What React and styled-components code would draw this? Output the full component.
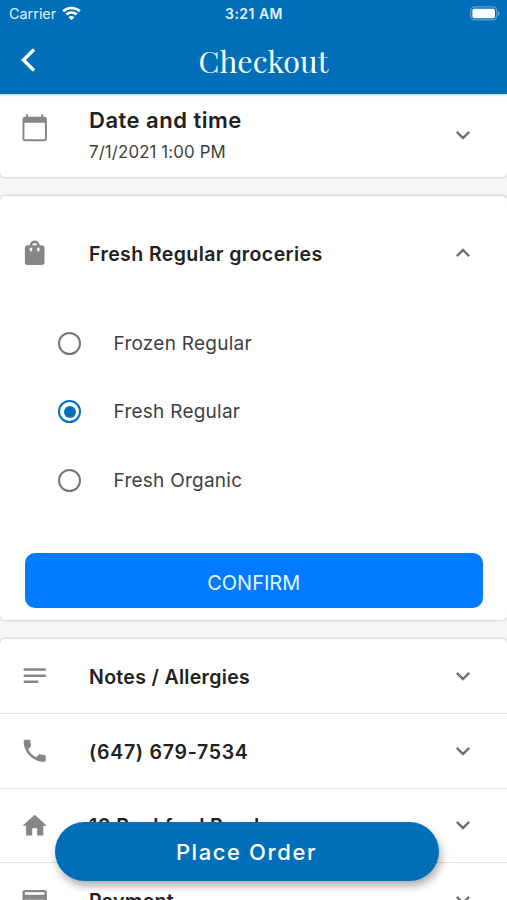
import React, { useState } from "react";
import styled, { createGlobalStyle } from "styled-components";

const GlobalStyle = createGlobalStyle`
  * { box-sizing: border-box; }
  body { margin: 0; background: #f6f6f6; font-family: Inter, "Liberation Sans", sans-serif; }
  button { font-family: inherit; border: 0; padding: 0; }
`;

const Screen = styled.div`
  position: relative;
  width: 507px;
  height: 900px;
  overflow: hidden;
  background: #f6f6f6;
  color: #212121;
`;

const Header = styled.header`
  position: relative;
  z-index: 1;
  height: 94px;
  background: #006fb9;
  color: #fff;
  box-shadow: 0 1px 2px rgba(0, 50, 110, 0.28);
`;

const StatusBar = styled.div`
  display: grid;
  grid-template-columns: 1fr auto 1fr;
  align-items: center;
  height: 27px;
  padding: 0 7px 0 9px;
  font-size: 14.4px;
  color: #e3f2fc;
`;

const Carrier = styled.div`
  display: flex;
  align-items: center;
  gap: 6px;
`;

const Clock = styled.div`
  margin-left: -1px;
  font-size: 14px;
  font-weight: 600;
  letter-spacing: 0.45px;
`;

const BatterySlot = styled.div`
  display: flex;
  justify-content: flex-end;
`;

const TitleBar = styled.div`
  display: grid;
  grid-template-columns: 60px 1fr 60px;
  align-items: center;
  height: 67px;
`;

const BackButton = styled.button`
  display: flex;
  justify-content: center;
  width: 56px;
  margin-top: -2px;
  background: none;
  color: #fff;
`;

const Title = styled.h1`
  margin: 0;
  padding: 1px 0 0 20px;
  text-align: center;
  font: 400 30.4px/40px "Playfair Display", "Liberation Serif", serif;
`;

const Card = styled.section`
  height: ${(p) => p.$height}px;
  margin-bottom: 19px;
  background: #fff;
  border-radius: ${(p) => (p.$first ? "0 0 5px 5px" : "5px")};
  box-shadow: 0 0 3px rgba(0, 0, 0, 0.3);
`;

const Row = styled.div`
  display: grid;
  grid-template-columns: 70px 1fr 88px;
  align-items: center;
  height: ${(p) => p.$height}px;
  border-bottom: ${(p) => (p.$divided ? "1px solid #e1e1e1" : "0")};
`;

const IconSlot = styled.div`
  display: flex;
  justify-content: center;
  color: #868686;
  padding-bottom: ${(p) => p.$lift || 0}px;
`;

const Label = styled.div`
  padding-left: 19px;
  padding-top: 2px;
  font-size: 19.5px;
  font-weight: 600;
  line-height: 26px;
  letter-spacing: ${(p) => p.$spacing ?? 0.41}px;
  white-space: nowrap;
`;

const DateBlock = styled.div`
  padding: 1px 0 0 19px;
`;

const DateHeading = styled.div`
  font-size: 22px;
  font-weight: 600;
  line-height: 30px;
  letter-spacing: 0.5px;
`;

const DateValue = styled.div`
  margin-top: 4px;
  font-size: 16.8px;
  line-height: 27px;
  letter-spacing: 0.15px;
  color: #3d3d3d;
`;

const ChevronSlot = styled.div`
  display: flex;
  justify-content: center;
  color: #707070;
`;

const Options = styled.div`
  display: flex;
  flex-direction: column;
`;

const Option = styled.label`
  display: flex;
  align-items: center;
  height: 68.5px;
  padding-left: 58px;
  gap: 32.5px;
  font-size: 19px;
  letter-spacing: 0.25px;
  color: #404040;
`;

const Radio = styled.span`
  display: grid;
  place-items: center;
  width: 23px;
  height: 23px;
  border: 2.6px solid ${(p) => (p.$on ? "#006fb9" : "#757575")};
  border-radius: 50%;
  &::after {
    content: "";
    width: 12px;
    height: 12px;
    border-radius: 50%;
    background: ${(p) => (p.$on ? "#006fb9" : "transparent")};
  }
`;

const ConfirmButton = styled.button`
  display: block;
  width: 457.5px;
  height: 54.6px;
  margin: 38.8px 0 0 25px;
  padding-top: 5px;
  border-radius: 10px;
  background: #007aff;
  color: #e9f4ff;
  font-size: 20px;
`;

const PlaceOrderButton = styled.button`
  position: absolute;
  left: 54.5px;
  top: 822px;
  width: 384px;
  height: 58.5px;
  padding-top: 1px;
  border-radius: 30px;
  background: #006fb9;
  color: #fff;
  font-size: 22px;
  font-weight: 500;
  letter-spacing: 1.6px;
  box-shadow: 2px 5px 8px rgba(0, 0, 0, 0.32);
`;

const icons = {
  calendar: "M20 3h-1V1h-1.6v2H6.6V1H5v2H4c-1.1 0-2 .9-2 2v16c0 1.1.9 2 2 2h16c1.1 0 2-.9 2-2V5c0-1.1-.9-2-2-2zm.4 18.4H3.6V8h16.8v13.4z",
  bag: "M18 6h-2c0-2.21-1.79-4-4-4S8 3.79 8 6H6c-1.1 0-2 .9-2 2v12c0 1.1.9 2 2 2h12c1.1 0 2-.9 2-2V8c0-1.1-.9-2-2-2zm-8 4c0 .55-.45 1-1 1s-1-.45-1-1V8h2v2zm2-6c1.1 0 2 .9 2 2h-4c0-1.1.9-2 2-2zm4 6c0 .55-.45 1-1 1s-1-.45-1-1V8h2v2z",
  notes: "M3 18h12v-2H3v2zM3 6v2h18V6H3zm0 7h18v-2H3v2z",
  phone: "M6.62 10.79c1.44 2.83 3.76 5.14 6.59 6.59l2.2-2.2c.27-.27.67-.36 1.02-.24 1.12.37 2.33.57 3.57.57.55 0 1 .45 1 1V20c0 .55-.45 1-1 1-9.39 0-17-7.61-17-17 0-.55.45-1 1-1h3.5c.55 0 1 .45 1 1 0 1.25.2 2.45.57 3.57.11.35.03.74-.25 1.02l-2.2 2.2z",
  home: "M10 20v-6h4v6h5v-8h3L12 3 2 12h3v8z",
  card: "M20 4H4c-1.11 0-1.99.89-1.99 2L2 18c0 1.11.89 2 2 2h16c1.11 0 2-.89 2-2V6c0-1.11-.89-2-2-2zm0 14H4v-6h16v6zm0-10H4V6h16v2z",
  down: "M16.59 8.59L12 13.17 7.41 8.59 6 10l6 6 6-6z",
  up: "M12 8l-6 6 1.41 1.41L12 10.83l4.59 4.58L18 14z",
};

function Glyph({ name, size = 29.4 }) {
  return (
    <svg width={size} height={size} viewBox="0 0 24 24" fill="currentColor" aria-hidden="true">
      <path d={icons[name]} />
    </svg>
  );
}

function Wifi() {
  return (
    <svg width="19" height="15" viewBox="0 0 19 15" fill="none" stroke="#fff" strokeWidth="2.7">
      <path d="M1.2 5.2C5.8.9 13.2.9 17.8 5.2" />
      <path d="M4.3 8.6c3-2.8 7.4-2.8 10.4 0" />
      <path d="M9.5 14.2 6.5 11.2c1.7-1.5 4.3-1.5 6 0z" fill="#fff" stroke="none" />
    </svg>
  );
}

function Battery() {
  return (
    <svg width="30" height="15" viewBox="0 0 30 15">
      <rect x=".7" y=".9" width="26" height="13" rx="3.8" fill="none" stroke="#5ba1d2" strokeWidth="1.2" />
      <rect x="2.4" y="2.8" width="22.6" height="9.4" rx="2" fill="#fff" />
      <path d="M28 5.2c2 .7 2 3.8 0 4.5z" fill="#72afd9" />
    </svg>
  );
}

const details = [
  { icon: "notes", text: "Notes / Allergies", spacing: 0.32 },
  { icon: "phone", text: "(647) 679-7534", spacing: 0.72 },
  { icon: "home", text: "10 Rockford Road", spacing: 0.4 },
  { icon: "card", text: "Payment", spacing: 0.35 },
];

export default function App() {
  const [choice, setChoice] = useState("Fresh Regular");
  return (
    <>
      <GlobalStyle />
      <Screen>
        <Header>
          <StatusBar>
            <Carrier>Carrier <Wifi /></Carrier>
            <Clock>3:21 AM</Clock>
            <BatterySlot><Battery /></BatterySlot>
          </StatusBar>
          <TitleBar>
            <BackButton aria-label="Back">
              <svg width="18" height="26" viewBox="0 0 18 26" fill="none" stroke="currentColor" strokeWidth="3.4">
                <path d="M15 2.5 4.5 13 15 23.5" />
              </svg>
            </BackButton>
            <Title>Checkout</Title>
          </TitleBar>
        </Header>

        <Card $height={83} $first>
          <Row $height={82}>
            <IconSlot $lift={14}><Glyph name="calendar" /></IconSlot>
            <DateBlock>
              <DateHeading>Date and time</DateHeading>
              <DateValue>7/1/2021 1:00 PM</DateValue>
            </DateBlock>
            <ChevronSlot><Glyph name="down" size={28} /></ChevronSlot>
          </Row>
        </Card>

        <Card $height={424}>
          <Row $height={113}>
            <IconSlot><Glyph name="bag" /></IconSlot>
            <Label>Fresh Regular groceries</Label>
            <ChevronSlot><Glyph name="up" size={28} /></ChevronSlot>
          </Row>
          <Options>
            {["Frozen Regular", "Fresh Regular", "Fresh Organic"].map((name) => (
              <Option key={name} onClick={() => setChoice(name)}>
                <Radio $on={choice === name} />
                {name}
              </Option>
            ))}
          </Options>
          <ConfirmButton>CONFIRM</ConfirmButton>
        </Card>

        <Card $height={300}>
          {details.map((d, i) => (
            <Row key={d.text} $height={i === 0 ? 75 : 74.5} $divided>
              <IconSlot><Glyph name={d.icon} /></IconSlot>
              <Label $spacing={d.spacing}>{d.text}</Label>
              <ChevronSlot><Glyph name="down" size={28} /></ChevronSlot>
            </Row>
          ))}
        </Card>
        <PlaceOrderButton>Place Order</PlaceOrderButton>
      </Screen>
    </>
  );
}
